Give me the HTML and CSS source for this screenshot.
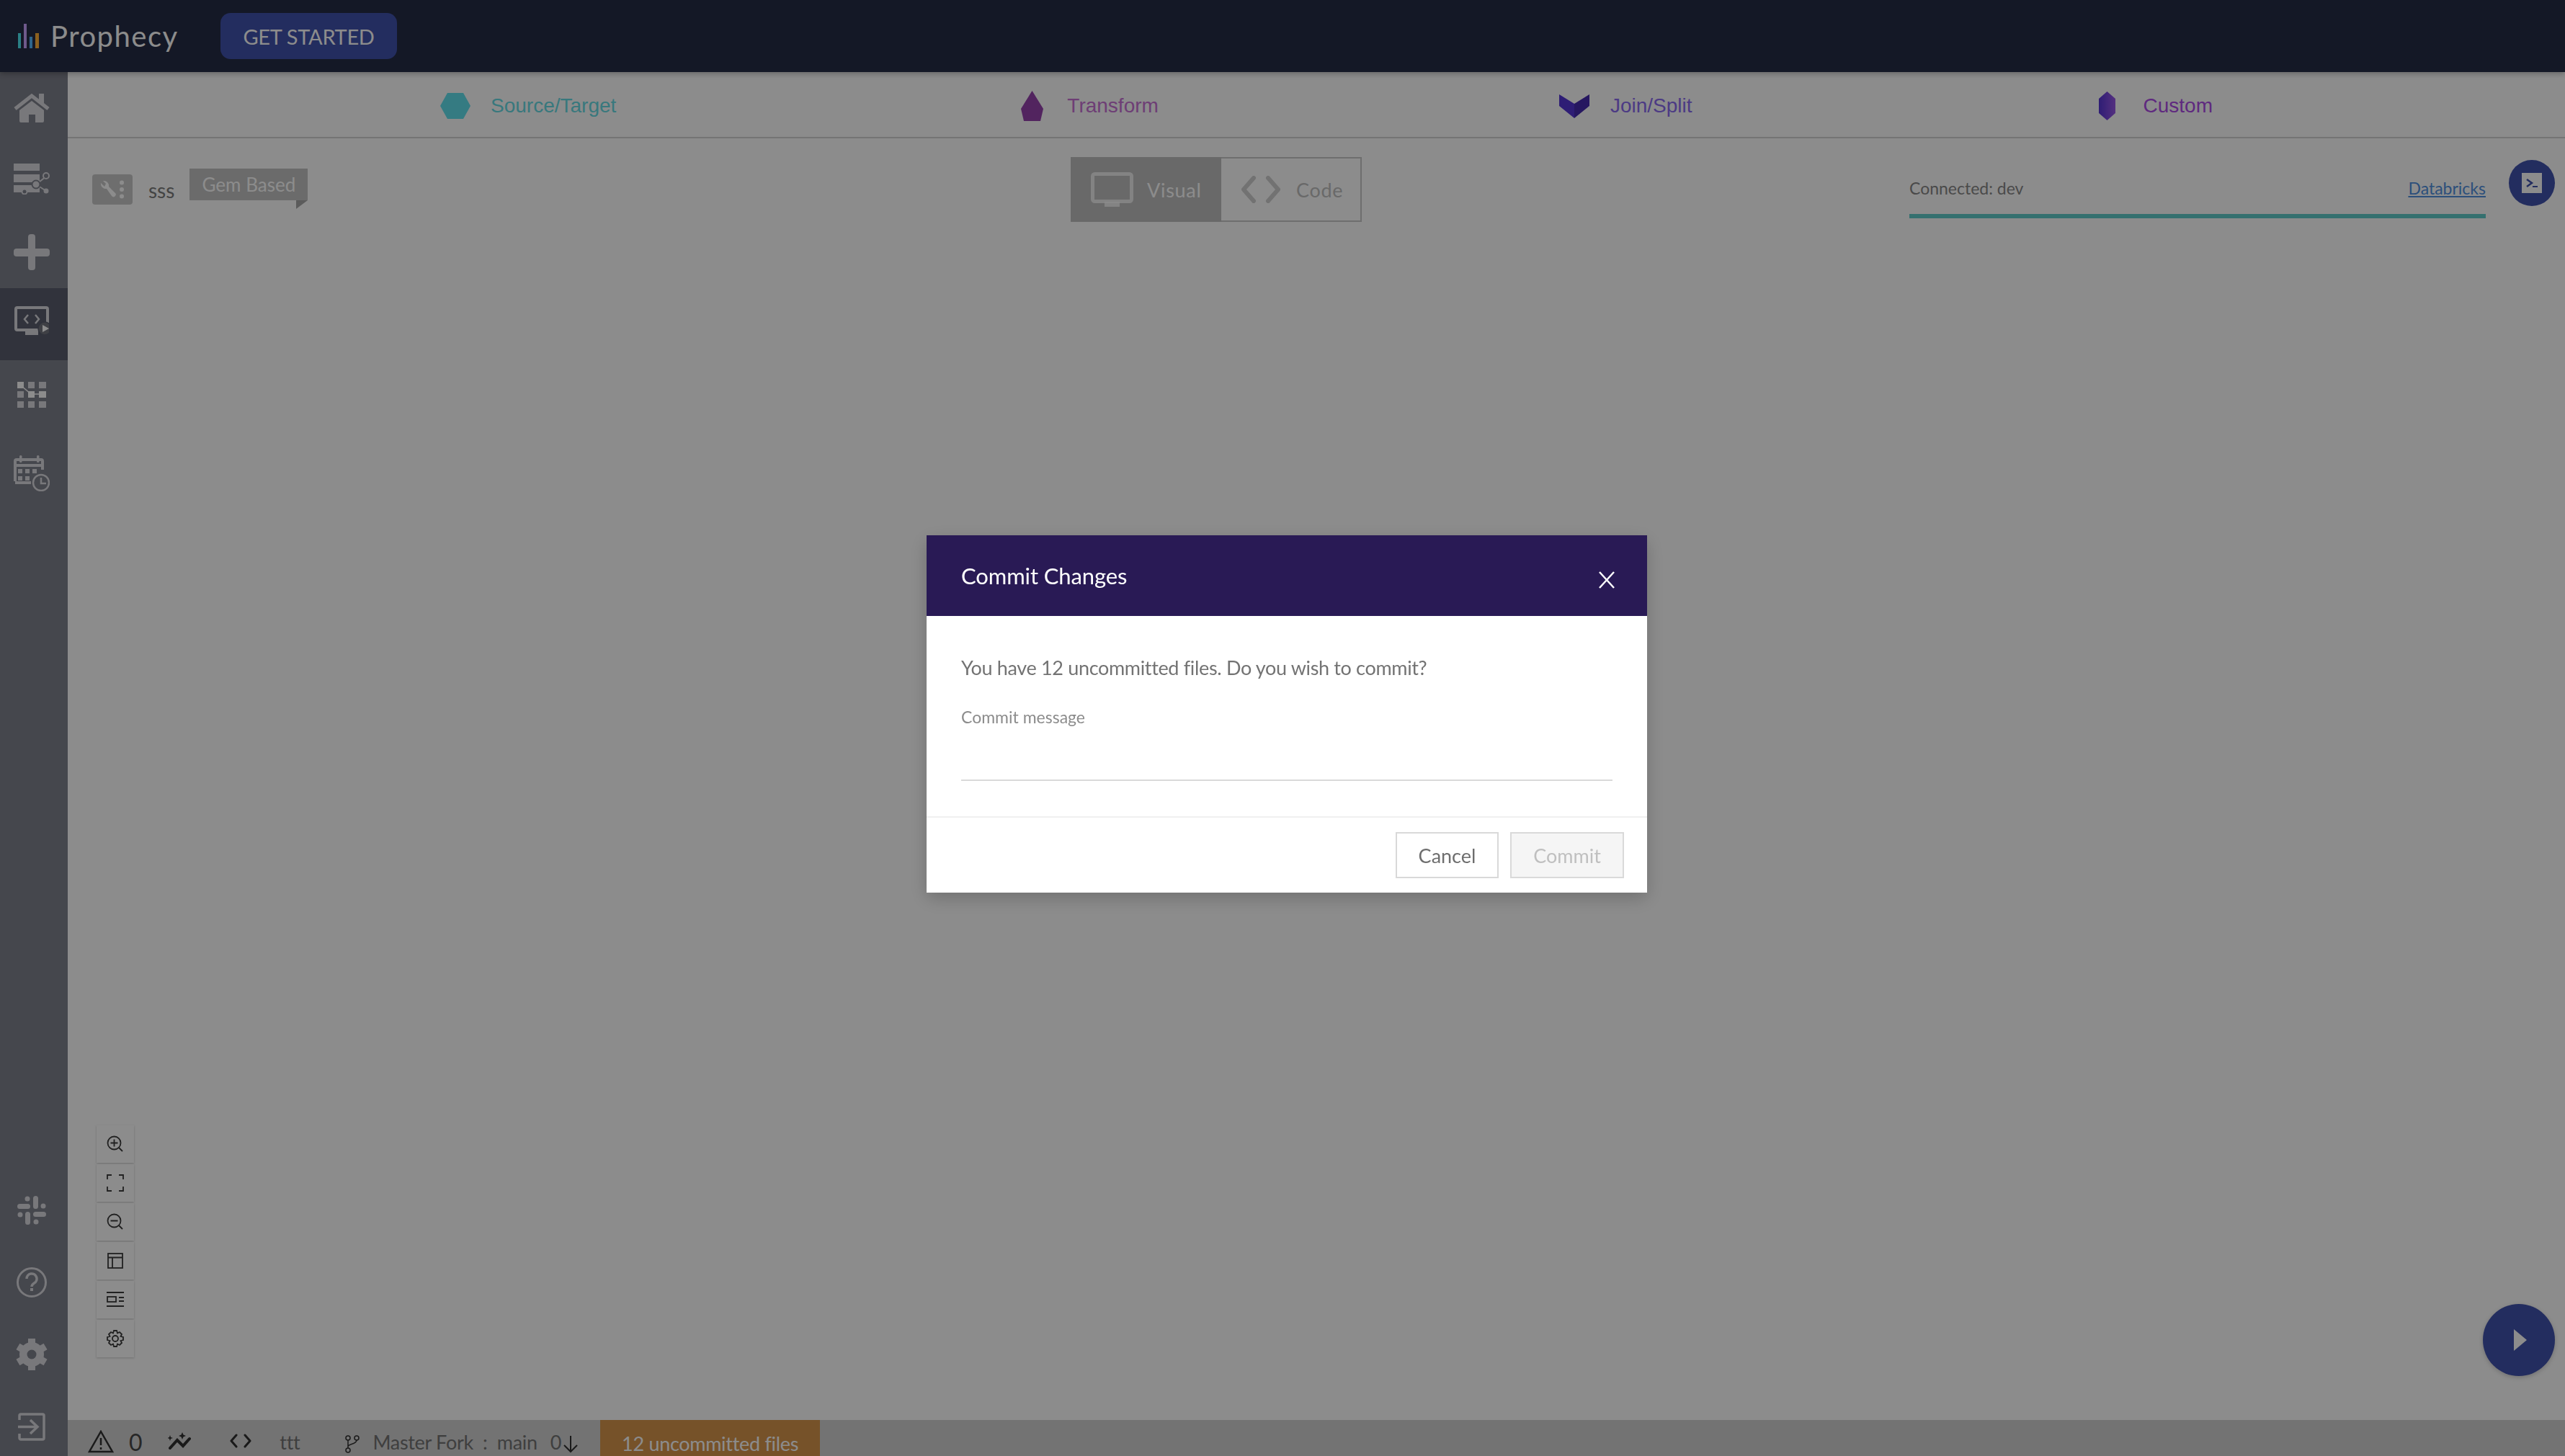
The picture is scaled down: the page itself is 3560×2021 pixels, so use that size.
FILE: index.html
```html
<!DOCTYPE html>
<html lang="en">
<head>
    <meta charset="UTF-8">
    <title>Prophecy - Commit Changes</title>
    <link rel="stylesheet" href="styles.css">
</head>
<body>

    <header class="topbar">
        <div class="logo">
            <svg class="logo-bars" width="29" height="34" viewBox="0 0 29 34">
                <rect x="0" y="13" width="4" height="21" fill="#4ee7f2"/>
                <rect x="8" y="0" width="4" height="34" fill="#caa4ff"/>
                <rect x="16" y="18" width="4" height="16" fill="#55b9ff"/>
                <rect x="24" y="13" width="5" height="21" fill="#ffb038"/>
            </svg>
            <span class="logo-name">Prophecy</span>
        </div>
        <button class="get-started">GET STARTED</button>
    </header>

    <div class="shell">
        <nav class="sidebar">
            <div class="side-group">
                <a class="side-item">
                    <svg width="50" height="40" viewBox="0 0 50 40">
                        <rect x="35" y="0" width="7" height="13" fill="#dadbe0"/>
                        <path d="M2 21 L25 3 L48 21" fill="none" stroke="#dadbe0" stroke-width="5"/>
                        <path d="M8 23 L25 10 L42 23 V38 a2 2 0 0 1 -2 2 H30 V29 H21 V40 H10 a2 2 0 0 1 -2 -2 Z" fill="#dadbe0"/>
                    </svg>
                </a>
                <a class="side-item up">
                    <svg width="50" height="43" viewBox="0 0 50 43">
                        <rect x="0" y="0" width="36" height="10" fill="#dadbe0"/>
                        <rect x="0" y="15" width="36" height="11" fill="#dadbe0"/>
                        <rect x="0" y="30" width="36" height="10" fill="#dadbe0"/>
                        <path d="M31 29 L45 18 M31 29 L45 38 M31 29 L15 39" stroke="#dadbe0" stroke-width="2"/>
                        <circle cx="31" cy="29" r="5.5" fill="#dadbe0" stroke="#7f818c" stroke-width="2"/>
                        <circle cx="45" cy="17" r="4" fill="#7f818c" stroke="#dadbe0" stroke-width="2"/>
                        <circle cx="15" cy="39" r="3.5" fill="#7f818c" stroke="#dadbe0" stroke-width="2"/>
                        <circle cx="45" cy="38" r="3.5" fill="#dadbe0"/>
                    </svg>
                </a>
                <a class="side-item">
                    <svg width="50" height="50" viewBox="0 0 50 50">
                        <rect x="0" y="20" width="50" height="11" rx="4" fill="#dadbe0"/>
                        <rect x="20" y="0" width="10" height="50" rx="4" fill="#dadbe0"/>
                    </svg>
                </a>
                <a class="side-item active">
                    <svg width="48" height="40" viewBox="0 0 48 40">
                        <rect x="2" y="2" width="44" height="31" rx="2" fill="none" stroke="#dadbe0" stroke-width="4"/>
                        <rect x="15" y="34" width="18" height="6" fill="#dadbe0"/>
                        <path d="M19 12 L14 18 L19 24 M29 12 L34 18 L29 24" fill="none" stroke="#dadbe0" stroke-width="2.5"/>
                        <circle cx="42" cy="31" r="9" fill="#73767f" stroke="#595d6d" stroke-width="1.5"/>
                        <path d="M39 26 L48 31 L39 36 Z" fill="#ffffff"/>
                    </svg>
                </a>
                <a class="side-item up">
                    <svg width="40" height="36" viewBox="0 0 40 36">
                        <g fill="#dadbe0">
                            <rect x="15" y="0" width="9" height="9"/>
                            <rect x="30" y="0" width="10" height="9"/>
                            <rect x="0" y="13" width="9" height="9"/>
                            <rect x="0" y="27" width="9" height="9"/>
                            <rect x="15" y="27" width="9" height="9"/>
                            <rect x="30" y="27" width="10" height="9"/>
                        </g>
                        <path d="M5 5 L19 17 H35" stroke="#ffffff" stroke-width="1.5" fill="none"/>
                        <rect x="0" y="0" width="9" height="9" fill="#ffffff"/>
                        <rect x="15" y="13" width="9" height="9" fill="#ffffff"/>
                        <rect x="30" y="13" width="10" height="9" fill="#ffffff"/>
                    </svg>
                </a>
                <a class="side-item calendar">
                    <svg width="50" height="50" viewBox="0 0 50 50">
                        <rect x="8" y="0" width="3.5" height="10" rx="1.5" fill="#dadbe0"/>
                        <rect x="32" y="0" width="3.5" height="10" rx="1.5" fill="#dadbe0"/>
                        <path d="M2 36 V8 a2 2 0 0 1 2 -2 H38 a2 2 0 0 1 2 2 V20 M2 14 H40 M2 38 H24" fill="none" stroke="#dadbe0" stroke-width="4"/>
                        <g fill="#dadbe0">
                            <rect x="6" y="19" width="6" height="6"/>
                            <rect x="16" y="19" width="6" height="6"/>
                            <rect x="26" y="19" width="6" height="6"/>
                            <rect x="6" y="29" width="6" height="6"/>
                            <rect x="16" y="29" width="6" height="6"/>
                        </g>
                        <circle cx="38" cy="38" r="11" fill="#7f818c" stroke="#dadbe0" stroke-width="2.5"/>
                        <path d="M38 31 V39 H45" fill="none" stroke="#dadbe0" stroke-width="2.5"/>
                    </svg>
                </a>
            </div>
            <div class="side-group bottom">
                <a class="side-item">
                    <svg width="40" height="40" viewBox="0 0 40 40">
                        <g stroke="#dadbe0" stroke-width="7" stroke-linecap="round">
                            <path d="M3.5 14.5 H14.5 M25.5 3.5 V14.5 M25.5 25.5 H36.5 M14.5 25.5 V36.5"/>
                        </g>
                        <g fill="#dadbe0">
                            <circle cx="14" cy="4" r="3.5"/>
                            <circle cx="36" cy="14" r="3.5"/>
                            <circle cx="26" cy="36" r="3.5"/>
                            <circle cx="4" cy="26" r="3.5"/>
                        </g>
                    </svg>
                </a>
                <a class="side-item">
                    <svg width="42" height="42" viewBox="0 0 42 42">
                        <circle cx="21" cy="21" r="19.5" fill="none" stroke="#dadbe0" stroke-width="3"/>
                        <path d="M14 16 a7 7 0 1 1 10.5 6 c-2.500 1.500 -3.500 3 -3.500 5" fill="none" stroke="#dadbe0" stroke-width="3.500"/>
                        <rect x="19" y="29" width="4" height="4" fill="#dadbe0"/>
                    </svg>
                </a>
                <a class="side-item">
                    <svg width="44" height="44" viewBox="0 0 44 44">
                        <circle cx="22" cy="22" r="11.500" fill="none" stroke="#dadbe0" stroke-width="11"/>
                        <g stroke="#dadbe0" stroke-width="10">
                            <path d="M22 15 V0 M22 29 V44"/>
                            <path d="M22 15 V0 M22 29 V44" transform="rotate(60 22 22)"/>
                            <path d="M22 15 V0 M22 29 V44" transform="rotate(120 22 22)"/>
                        </g>
                        <circle cx="22" cy="22" r="6.500" fill="#7f818c"/>
                    </svg>
                </a>
                <a class="side-item last">
                    <svg width="38" height="39" viewBox="0 0 38 39">
                        <path d="M2 10 V4 a2 2 0 0 1 2 -2 H34 a2 2 0 0 1 2 2 V35 a2 2 0 0 1 -2 2 H4 a2 2 0 0 1 -2 -2 V29" fill="none" stroke="#dadbe0" stroke-width="3.500"/>
                        <path d="M0 19.500 H26 M17 10 L27 19.500 L17 29" fill="none" stroke="#dadbe0" stroke-width="3.500"/>
                    </svg>
                </a>
            </div>
        </nav>

        <main class="workspace">
            <div class="palette">
                <div class="palette-item source">
                    <svg width="42" height="36" viewBox="0 0 42 36"><polygon points="10,0 32,0 42,18 32,36 10,36 0,18" fill="#61e0ed"/></svg>
                    <span>Source/Target</span>
                </div>
                <div class="palette-item transform">
                    <svg width="31" height="42" viewBox="0 0 31 42"><polygon points="15.500,0 31,25 27,42 4,42 0,25" fill="#9543ad"/></svg>
                    <span>Transform</span>
                </div>
                <div class="palette-item join">
                    <svg width="42" height="33" viewBox="0 0 42 33">
                        <polygon points="0,0 21,13 21,33 0,16" fill="#5535d5"/>
                        <polygon points="42,0 21,13 21,33 42,16" fill="#452ab0"/>
                    </svg>
                    <span>Join/Split</span>
                </div>
                <div class="palette-item custom">
                    <svg width="23" height="40" viewBox="0 0 23 40">
                        <defs>
                            <linearGradient id="customFill" x1="0" y1="0" x2="1" y2="0">
                                <stop offset="0" stop-color="#5535d5"/>
                                <stop offset="1" stop-color="#9a58e8"/>
                            </linearGradient>
                        </defs>
                        <polygon points="11.500,0 23,10 23,30 11.500,40 0,30 0,10" fill="url(#customFill)"/>
                    </svg>
                    <span>Custom</span>
                </div>
            </div>

            <div class="toolbar">
                <div class="project">
                    <span class="tool-badge">
                        <svg width="36" height="26" viewBox="0 0 36 26">
                            <path d="M2 4 a7 7 0 0 0 8 8 L17 22 a3 3 0 0 0 5 -4 L13 9 a7 7 0 0 0 -8 -8 L9 5 L7 9 Z" fill="#ffffff"/>
                            <circle cx="31" cy="3.500" r="3" fill="#ffffff"/>
                            <circle cx="31" cy="13" r="3" fill="#ffffff"/>
                            <circle cx="31" cy="22.500" r="3" fill="#ffffff"/>
                        </svg>
                    </span>
                    <span class="project-name">sss</span>
                    <span class="gem-tag">Gem Based</span>
                </div>

                <div class="view-toggle">
                    <div class="view-btn selected">
                        <svg width="59" height="48" viewBox="0 0 59 48">
                            <rect x="2.500" y="2.500" width="54" height="38" rx="3" fill="none" stroke="#ffffff" stroke-opacity=".75" stroke-width="5"/>
                            <rect x="19" y="41" width="21" height="7" fill="#ffffff" fill-opacity=".75"/>
                        </svg>
                        <span>Visual</span>
                    </div>
                    <div class="view-btn">
                        <svg width="54" height="38" viewBox="0 0 54 38">
                            <path d="M17 3 L3 19 L17 35 M37 3 L51 19 L37 35" fill="none" stroke="#d0d0d0" stroke-width="6" stroke-linecap="round" stroke-linejoin="round"/>
                        </svg>
                        <span>Code</span>
                    </div>
                </div>

                <div class="connection">
                    <div class="connection-row">
                        <span>Connected: dev</span>
                        <a class="provider">Databricks</a>
                    </div>
                    <div class="connection-bar"></div>
                </div>

                <div class="terminal-btn">
                    <svg width="28" height="28" viewBox="0 0 28 28">
                        <rect width="28" height="28" fill="#ffffff"/>
                        <path d="M7 9 L14 14 L7 19" fill="none" stroke="#4152ad" stroke-width="2.500"/>
                        <rect x="15" y="18" width="7" height="2" fill="#4152ad"/>
                    </svg>
                </div>
            </div>

            <div class="canvas">
                <div class="canvas-tools">
                    <div class="canvas-tool">
                        <svg width="24" height="24" viewBox="0 0 24 24" class="line-icon"><circle cx="10.500" cy="10.500" r="9"/><path d="M10.500 5.500 V15.500 M5.500 10.500 H15.500 M17 17 L22 22"/></svg>
                    </div>
                    <div class="canvas-tool">
                        <svg width="24" height="24" viewBox="0 0 24 24" class="line-icon"><path d="M1 7 V1 H7 M17 1 H23 V7 M23 17 V23 H17 M7 23 H1 V17"/></svg>
                    </div>
                    <div class="canvas-tool">
                        <svg width="24" height="24" viewBox="0 0 24 24" class="line-icon"><circle cx="10.500" cy="10.500" r="9"/><path d="M5.500 10.500 H15.500 M17 17 L22 22"/></svg>
                    </div>
                    <div class="canvas-tool">
                        <svg width="24" height="24" viewBox="0 0 24 24" class="line-icon"><rect x="2" y="2" width="20" height="20"/><path d="M2 7.500 H22 M8 7.500 V22"/></svg>
                    </div>
                    <div class="canvas-tool">
                        <svg width="26" height="24" viewBox="0 0 26 24" class="line-icon"><path d="M1 2 H25 M1 21 H25 M18 9 H25 M18 14 H25"/><rect x="2" y="8" width="12" height="7"/></svg>
                    </div>
                    <div class="canvas-tool">
                        <svg width="24" height="24" viewBox="0 0 24 24" class="line-icon"><path d="M10 1 H14 L15 4.500 L18 3 L21 6 L19.500 9 L23 10 V14 L19.500 15 L21 18 L18 21 L15 19.500 L14 23 H10 L9 19.500 L6 21 L3 18 L4.500 15 L1 14 V10 L4.500 9 L3 6 L6 3 L9 4.500 Z"/><circle cx="12" cy="12" r="4"/></svg>
                    </div>
                </div>
                <div class="run-btn">
                    <svg width="18" height="30" viewBox="0 0 18 30"><polygon points="0,0 18,15 0,30" fill="#ffffff"/></svg>
                </div>
            </div>

            <footer class="statusbar">
                <svg class="warn-icon" width="36" height="32" viewBox="0 0 36 32">
                    <path d="M18 2 L34 30 H2 Z" fill="none" stroke="#303030" stroke-width="2.500"/>
                    <path d="M18 11 V21 M18 24 V27" stroke="#303030" stroke-width="2.500"/>
                </svg>
                <span class="warn-count">0</span>
                <svg class="spark-icon" width="33" height="24" viewBox="0 0 33 24">
                    <path d="M3 22 L13 11 L21 19 L30 9" fill="none" stroke="#303030" stroke-width="4" stroke-linecap="round"/>
                    <path d="M20 0 L21.500 3.500 L25 5 L21.500 6.500 L20 10 L18.500 6.500 L15 5 L18.500 3.500 Z M3 4 L4 7 L7 8 L4 9 L3 12 L2 9 L-1 8 L2 7 Z" fill="#303030"/>
                </svg>
                <svg class="code-icon" width="30" height="20" viewBox="0 0 30 20">
                    <path d="M9 2 L2 10 L9 18 M21 2 L28 10 L21 18" fill="none" stroke="#303030" stroke-width="3" stroke-linecap="round" stroke-linejoin="round"/>
                </svg>
                <span class="status-text ttt">ttt</span>
                <svg class="branch-icon" width="21" height="25" viewBox="0 0 21 25">
                    <circle cx="5" cy="4" r="3" fill="none" stroke="#303030" stroke-width="1.500"/>
                    <circle cx="17" cy="4" r="3" fill="none" stroke="#303030" stroke-width="1.500"/>
                    <circle cx="5" cy="21" r="3" fill="none" stroke="#303030" stroke-width="1.500"/>
                    <path d="M5 7 V18 M5 16 C5 12 17 13 17 7" fill="none" stroke="#303030" stroke-width="1.500"/>
                </svg>
                <span class="status-text branch">Master Fork&nbsp; :&nbsp; main</span>
                <span class="status-text behind">0</span>
                <svg class="down-icon" width="22" height="24" viewBox="0 0 22 24">
                    <path d="M11 0 V22 M2 13 L11 22 L20 13" fill="none" stroke="#303030" stroke-width="2"/>
                </svg>
                <span class="uncommitted">12 uncommitted files</span>
            </footer>
        </main>
    </div>

    <div class="overlay">
        <div class="dialog">
            <div class="dialog-head">
                <span>Commit Changes</span>
                <svg width="22" height="24" viewBox="0 0 22 24">
                    <path d="M1 1 L21 23 M21 1 L1 23" stroke="#ffffff" stroke-width="2.500"/>
                </svg>
            </div>
            <div class="dialog-body">
                <p class="dialog-text">You have 12 uncommitted files. Do you wish to commit?</p>
                <label class="field-label" for="commit-message">Commit message</label>
                <input class="field-input" id="commit-message" type="text">
            </div>
            <div class="dialog-foot">
                <button class="btn">Cancel</button>
                <button class="btn disabled" disabled>Commit</button>
            </div>
        </div>
    </div>

</body>
</html>
```

FILE: styles.css
```css
* {
    box-sizing: border-box;
}
html, body {
    height: 100%;
}
body {
    margin: 0;
    font-family: 'Lato', 'Noto Sans', sans-serif;
    background-color: #ffffff;
    color: #737373;
    overflow: hidden;
    display: flex;
    flex-direction: column;
}
svg {
    display: block;
    flex-shrink: 0;
}

/* top bar */
.topbar {
    height: 100px;
    flex-shrink: 0;
    background-color: #262d45;
    display: flex;
    align-items: center;
    padding-left: 25px;
    box-shadow: 0 2px 8px rgba(0,0,0,0.3);
    position: relative;
}
.logo {
    display: flex;
    align-items: center;
    width: 281px;
}
.logo-name {
    font-size: 40px;
    color: #ffffff;
    letter-spacing: 1.5px;
    margin-left: 16px;
}
.get-started {
    width: 245px;
    height: 64px;
    border: none;
    border-radius: 14px;
    background-color: #4152ad;
    color: #ffffff;
    font-family: inherit;
    font-size: 29px;
    letter-spacing: -0.3px;
    padding: 0;
}

/* layout */
.shell {
    flex: 1;
    display: flex;
    min-height: 0;
}
.sidebar {
    width: 94px;
    flex-shrink: 0;
    background-color: #7f818c;
    display: flex;
    flex-direction: column;
    justify-content: space-between;
}
.side-item {
    height: 100px;
    display: flex;
    align-items: center;
    justify-content: center;
    padding-right: 6px;
}
.side-item.up {
    padding-bottom: 4px;
}
.side-item.active {
    background-color: #595d6d;
    padding-bottom: 10px;
}
.side-item.calendar {
    padding-top: 14px;
}
.side-item.last {
    height: 91px;
    align-items: flex-start;
    padding-top: 31px;
}
.workspace {
    flex: 1;
    display: flex;
    flex-direction: column;
    min-width: 0;
}

/* gem palette */
.palette {
    height: 92px;
    flex-shrink: 0;
    border-bottom: 2px solid #d4d4d4;
    display: flex;
    align-items: center;
    gap: 560px;
    padding: 4px 0 0 517px;
    font-family: 'Liberation Sans', Arial, sans-serif;
    font-size: 28px;
}
.palette-item {
    display: flex;
    align-items: center;
    gap: 28px;
}
.source { color: #66dbe4; }
.transform { color: #c872d6; gap: 33px; margin-left: 2px; }
.join { color: #8a6bf0; gap: 29px; margin-left: -4px; }
.custom { color: #ad4ce8; gap: 39px; margin-left: 4px; }

/* toolbar under the palette */
.toolbar {
    display: grid;
    grid-template-columns: 1358px 404px 760px 800px 96px;
    padding: 26px 0 0 34px;
    flex-shrink: 0;
}
.project {
    display: flex;
    align-items: flex-start;
}
.tool-badge {
    width: 56px;
    height: 42px;
    margin-top: 24px;
    background-color: #c9c9c9;
    border-radius: 4px;
    display: flex;
    align-items: center;
    justify-content: center;
}
.project-name {
    font-size: 28px;
    color: #7c7c7c;
    margin: 27px 0 0 22px;
    line-height: 38px;
}
.gem-tag {
    position: relative;
    margin: 16px 0 0 21px;
    width: 164px;
    height: 44px;
    line-height: 44px;
    text-align: center;
    background-color: #c3c3c3;
    color: #ffffff;
    font-size: 26px;
}
.gem-tag::after {
    content: "";
    position: absolute;
    right: 0;
    top: 44px;
    width: 0;
    height: 0;
    border-top: 12px solid #a7a7a7;
    border-right: 16px solid transparent;
}
.view-toggle {
    display: flex;
    height: 90px;
    border: 2px solid #c9c9c9;
    font-size: 27px;
    letter-spacing: 0.7px;
}
.view-btn {
    display: flex;
    align-items: center;
    flex: 1;
    padding-left: 28px;
    gap: 22px;
    color: #c0c0c0;
}
.view-btn.selected {
    flex: 0 0 209px;
    background-color: #bfbfbf;
    color: #ffffff;
    padding-left: 28px;
    gap: 19px;
    margin: -2px 0 -2px -2px;
}
.connection {
    grid-column: 4;
    padding-top: 24px;
}
.connection-row {
    display: flex;
    justify-content: space-between;
    font-size: 23px;
    line-height: 38px;
    color: #888888;
}
.provider {
    color: #5090e0;
    text-decoration: underline;
}
.connection-bar {
    height: 6px;
    margin-top: 17px;
    background-color: #62cccb;
}
.terminal-btn {
    width: 64px;
    height: 64px;
    margin: 4px 0 0 32px;
    border-radius: 50%;
    background-color: #4152ad;
    display: flex;
    align-items: center;
    justify-content: center;
}

/* canvas */
.canvas {
    flex: 1;
    position: relative;
}
.canvas-tools {
    position: absolute;
    left: 40px;
    bottom: 87px;
    display: flex;
    flex-direction: column;
    gap: 2px;
}
.canvas-tool {
    width: 52px;
    height: 52px;
    background-color: #ffffff;
    box-shadow: 0 1px 3px rgba(0,0,0,0.2);
    display: flex;
    align-items: center;
    justify-content: center;
}
.line-icon {
    fill: none;
    stroke: #3c3c3c;
    stroke-width: 1.8;
}
.run-btn {
    position: absolute;
    right: 14px;
    bottom: 61px;
    width: 100px;
    height: 100px;
    border-radius: 50%;
    background-color: #4152ad;
    box-shadow: 0 2px 6px rgba(0,0,0,0.2);
    display: flex;
    align-items: center;
    justify-content: center;
    padding-left: 3px;
}

/* status bar */
.statusbar {
    height: 50px;
    flex-shrink: 0;
    background-color: #d1d1d1;
    display: flex;
    align-items: flex-start;
    font-size: 27px;
    letter-spacing: -0.3px;
    color: #737373;
    overflow: hidden;
}
.status-text {
    line-height: 34px;
    margin-top: 14px;
}
.warn-icon { margin: 14px 0 0 28px; }
.warn-count {
    font-size: 32px;
    line-height: 38px;
    margin: 12px 0 0 21px;
    color: #484848;
}
.spark-icon { margin: 17px 0 0 36px; }
.code-icon { margin: 19px 0 0 53px; }
.ttt { margin-left: 39px; }
.branch-icon { margin: 21px 0 0 62px; }
.branch { margin-left: 18px; }
.behind { margin-left: 18px; }
.down-icon { margin: 22px 0 0 2px; }
.uncommitted {
    margin-left: 30px;
    width: 305px;
    height: 50px;
    line-height: 66px;
    text-align: center;
    background-color: #d8954c;
    color: #ffffff;
    font-size: 27px;
}

/* commit dialog */
.overlay {
    position: fixed;
    inset: 0;
    background-color: rgba(0,0,0,0.45);
    display: flex;
    justify-content: center;
    align-items: flex-start;
    padding: 743px 0 0 12px;
}
.dialog {
    width: 1000px;
    height: 496px;
    background-color: #ffffff;
    box-shadow: 0 8px 24px rgba(0,0,0,0.2);
}
.dialog-head {
    height: 112px;
    background-color: #291a55;
    color: #ffffff;
    font-size: 31px;
    letter-spacing: -0.1px;
    display: flex;
    align-items: center;
    justify-content: space-between;
    padding: 0 45px 0 48px;
}
.dialog-head svg {
    margin-top: 11px;
}
.dialog-body {
    padding: 52px 48px 49px;
    border-bottom: 2px solid #f0f0f0;
}
.dialog-text {
    margin: 0 0 28px;
    font-size: 27px;
    letter-spacing: -0.34px;
    line-height: 40px;
    color: #737373;
}
.field-label {
    display: block;
    font-size: 23px;
    line-height: 40px;
    color: #8c8c8c;
}
.field-input {
    display: block;
    width: 100%;
    height: 69px;
    border: none;
    border-bottom: 2px solid #d9d9d9;
    outline: none;
}
.dialog-foot {
    display: flex;
    justify-content: flex-end;
    gap: 16px;
    padding: 20px 32px;
}
.btn {
    height: 64px;
    width: 143px;
    border: 2px solid #d9d9d9;
    background-color: #ffffff;
    color: #6e6e6e;
    font-family: inherit;
    font-size: 27px;
    padding: 0;
}
.btn.disabled {
    width: 158px;
    background-color: #f5f5f5;
    color: #bfbfbf;
}
```
